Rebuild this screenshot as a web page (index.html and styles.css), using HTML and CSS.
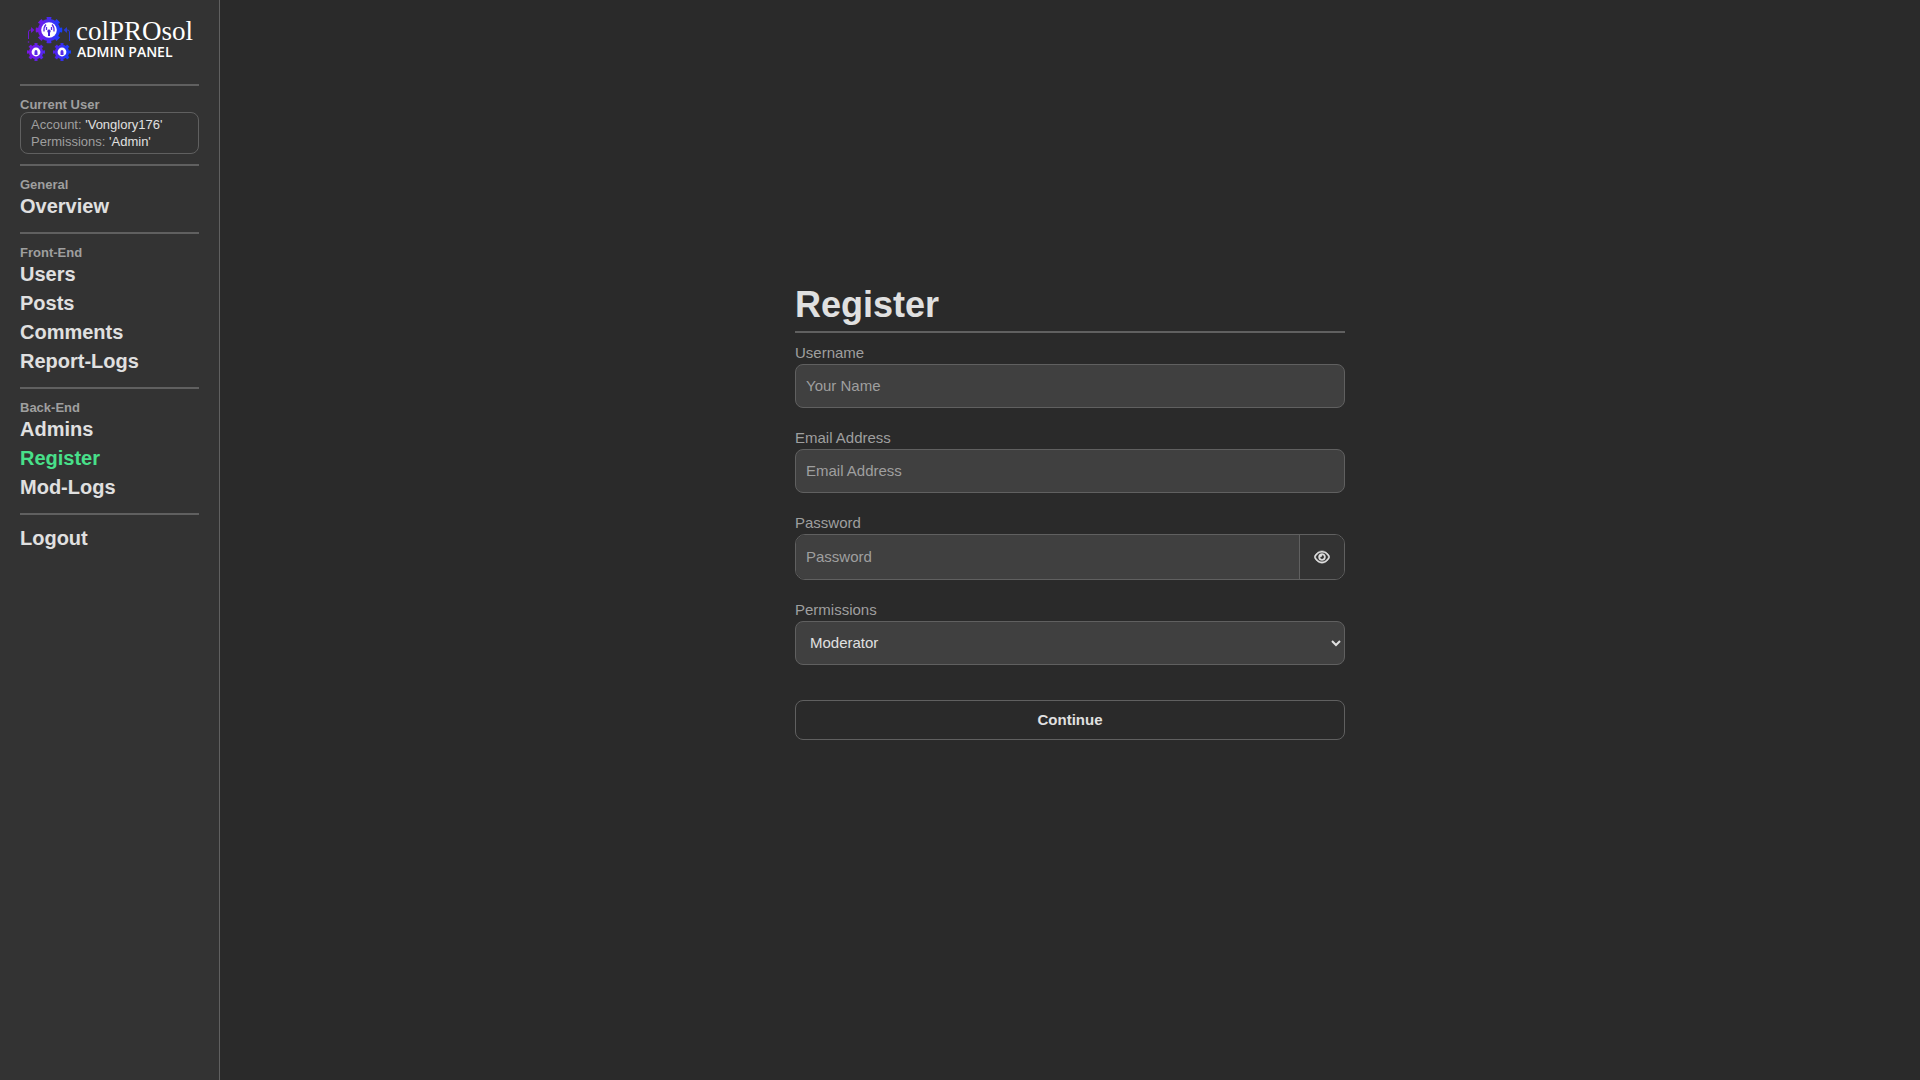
FILE: index.html
```html
<!DOCTYPE html>
<html lang="en">
<head>
<meta charset="utf-8">
<meta name="viewport" content="width=device-width, initial-scale=1">
<title>colPROsol Admin Panel - Register</title>
<link rel="stylesheet" href="styles.css">
</head>
<body>
<aside class="sidebar">
  <a class="logo" href="#">
    <svg class="logo-mark" viewBox="0 0 44 44" aria-hidden="true">
      <defs>
        <linearGradient id="brand-main" gradientUnits="userSpaceOnUse" x1="9" y1="0" x2="35" y2="0"><stop offset="0" stop-color="#7d14e6"/><stop offset="1" stop-color="#1440ff"/></linearGradient>
        <linearGradient id="brand-left" gradientUnits="userSpaceOnUse" x1="0" y1="0" x2="18" y2="0"><stop offset="0" stop-color="#7d14e6"/><stop offset="1" stop-color="#5028f0"/></linearGradient>
        <linearGradient id="brand-right" gradientUnits="userSpaceOnUse" x1="26" y1="0" x2="44" y2="0"><stop offset="0" stop-color="#5a1eea"/><stop offset="1" stop-color="#1440ff"/></linearGradient>
      </defs>
      <circle cx="22" cy="13" r="11" fill="url(#brand-main)"/>
      <circle cx="22" cy="13" r="11.8" fill="none" stroke="url(#brand-main)" stroke-width="3" pathLength="16" stroke-dasharray="1 1" stroke-dashoffset=".5"/>
      <circle cx="22" cy="13" r="7.800" fill="#fff"/>
      <path d="M19 7.500q-2.500 2.500-2 7M25 7.500q2.500 2.500 2 7M19.500 10v3M24.500 10v3" fill="none" stroke="#5a2be8" stroke-width="1.300"/>
      <path d="M22 12.500a1.800 1.800 0 0 1 1 3.200V19h-2v-3.300a1.800 1.800 0 0 1 1-3.200z" fill="#4424d8"/>
      <circle cx="9" cy="35" r="7.200" fill="url(#brand-left)"/>
      <circle cx="9" cy="35" r="7.800" fill="none" stroke="url(#brand-left)" stroke-width="2.400" pathLength="16" stroke-dasharray="1 1" stroke-dashoffset=".5"/>
      <circle cx="35" cy="35" r="7.200" fill="url(#brand-right)"/>
      <circle cx="35" cy="35" r="7.800" fill="none" stroke="url(#brand-right)" stroke-width="2.400" pathLength="16" stroke-dasharray="1 1" stroke-dashoffset=".5"/>
      <circle cx="9" cy="35" r="4.400" fill="#fff"/>
      <circle cx="35" cy="35" r="4.400" fill="#fff"/>
      <path d="M7.500 38v-3a1.500 2 0 0 1 3 0v3zM33.500 38v-3a1.500 2 0 0 1 3 0v3z" fill="#5a2be8"/>
      <path d="M1.500 22v-7q0-2 2-2h1" fill="none" stroke="#6c1bd0"/>
      <path d="M4 10 7.500 13 4 16z" fill="#6c1bd0"/>
      <circle cx="1.500" cy="25" r=".8" fill="#6c1bd0"/>
      <path d="M42.500 24v-9q0-2-2-2h-1" fill="none" stroke="#2a3bd0"/>
      <path d="M40 10 36.500 13l3.500 3z" fill="#2a3bd0"/>
    </svg>
    <span class="logo-text">
      <span class="logo-name">colPROsol</span>
      <span class="logo-sub">ADMIN PANEL</span>
    </span>
  </a>

  <section class="group group-user">
    <h2 class="group-title">Current User</h2>
    <div class="user-card">
      <div>Account: <span class="user-value">'Vonglory176'</span></div>
      <div>Permissions: <span class="user-value">'Admin'</span></div>
    </div>
  </section>
  <nav>
    <section class="group">
      <h2 class="group-title">General</h2>
      <a class="nav-link" href="#">Overview</a>
    </section>
    <section class="group">
      <h2 class="group-title">Front-End</h2>
      <a class="nav-link" href="#">Users</a>
      <a class="nav-link" href="#">Posts</a>
      <a class="nav-link" href="#">Comments</a>
      <a class="nav-link" href="#">Report-Logs</a>
    </section>
    <section class="group">
      <h2 class="group-title">Back-End</h2>
      <a class="nav-link" href="#">Admins</a>
      <a class="nav-link nav-link-active" href="#" aria-current="page">Register</a>
      <a class="nav-link" href="#">Mod-Logs</a>
    </section>
    <section class="group">
      <a class="nav-link" href="#">Logout</a>
    </section>
  </nav>
</aside>

<main class="content">
  <form class="form">
    <h1 class="form-title">Register</h1>
    <div class="field">
      <label class="label" for="username">Username</label>
      <input class="control" id="username" type="text" placeholder="Your Name">
    </div>
    <div class="field">
      <label class="label" for="email">Email Address</label>
      <input class="control" id="email" type="email" placeholder="Email Address">
    </div>
    <div class="field">
      <label class="label" for="password">Password</label>
      <div class="password">
        <input class="control password-input" id="password" type="password" placeholder="Password">
        <button class="password-toggle" type="button" aria-label="Show password">
          <svg class="eye" viewBox="0 0 576 512" aria-hidden="true"><path fill="currentColor" stroke="currentColor" stroke-width="18" d="M288 80c-65.2 0-118.8 29.6-159.9 67.7C89.6 183.5 63 226 49.4 256c13.6 30 40.2 72.5 78.6 108.3C169.2 402.4 222.8 432 288 432s118.8-29.6 159.9-67.7C486.4 328.5 513 286 526.6 256c-13.6-30-40.2-72.5-78.6-108.3C406.8 109.6 353.2 80 288 80zM95.4 112.6C142.5 68.8 207.2 32 288 32s145.5 36.8 192.6 80.6c46.8 43.5 78.1 95.4 93 131.1c3.3 7.9 3.3 16.7 0 24.6c-14.9 35.7-46.2 87.7-93 131.1C433.5 443.2 368.8 480 288 480s-145.5-36.8-192.6-80.6C48.6 356 17.3 304 2.5 268.3c-3.3-7.9-3.3-16.7 0-24.6C17.3 208 48.6 156 95.4 112.6zM288 336c44.2 0 80-35.8 80-80s-35.8-80-80-80c-.7 0-1.3 0-2 0c1.3 5.1 2 10.5 2 16c0 35.3-28.7 64-64 64c-5.5 0-10.900-.7-16-2c0 .7 0 1.3 0 2c0 44.2 35.8 80 80 80zm0-208a128 128 0 1 1 0 256 128 128 0 1 1 0-256z"/></svg>
        </button>
      </div>
    </div>
    <div class="field">
      <label class="label" for="permissions">Permissions</label>
      <select class="control" id="permissions">
        <option>Moderator</option>
        <option>Admin</option>
      </select>
    </div>
    <button class="submit" type="submit">Continue</button>
  </form>
</main>
</body>
</html>
```

FILE: styles.css
```css
:root {
  --line: #606060;
  --text: #e0e0e0;
  --muted: #9f9f9f;
  --panel: #333333;
  --field: #404040;
}

* {
  box-sizing: border-box;
}

body {
  margin: 0;
  min-height: 100vh;
  display: flex;
  background: #2a2a2a;
  color: var(--text);
  font-family: "Liberation Sans", Arial, sans-serif;
  font-size: 15px;
}

.sidebar {
  flex: none;
  width: 220px;
  padding: 15px 20px;
  background: var(--panel);
  border-right: 1px solid var(--line);
}

.logo {
  display: flex;
  gap: 5px;
  padding: 2px 0 23px 7px;
  color: #fff;
  text-decoration: none;
}

.logo-mark {
  flex: none;
  width: 44px;
  height: 44px;
}

.logo-text {
  display: flex;
  flex-direction: column;
}

.logo-name {
  font-family: "Liberation Serif", "Times New Roman", serif;
  font-size: 27px;
  line-height: 28px;
}

.logo-sub {
  padding-left: 1px;
  font-family: "Open Sans", sans-serif;
  font-size: 14px;
  font-weight: 600;
  line-height: 14px;
}

.group {
  border-top: 2px solid var(--line);
  padding: 9px 0 11px;
}

.group-user {
  padding-bottom: 10px;
}

.group-title {
  margin: 0;
  padding-top: 2px;
  color: var(--muted);
  font-size: 13px;
  line-height: 15px;
}

.user-card {
  padding: 3px 10px;
  border: 1px solid var(--line);
  border-radius: 8px;
  color: var(--muted);
  font-size: 13px;
  line-height: 17px;
}

.user-value {
  color: var(--text);
}

.nav-link {
  display: block;
  color: var(--text);
  font-size: 20px;
  font-weight: bold;
  line-height: 29px;
  text-decoration: none;
}

.nav-link-active {
  color: #48e08a;
}

.content {
  flex: 1;
  display: flex;
  align-items: center;
  justify-content: center;
  padding: 0 20px 55px;
}

.form {
  width: 100%;
  max-width: 550px;
}

.form-title {
  margin: 0 0 10px;
  padding-bottom: 7px;
  border-bottom: 2px solid var(--line);
  font-size: 36px;
  line-height: 39px;
}

.field {
  display: flex;
  flex-direction: column;
  margin-bottom: 20px;
  color: var(--muted);
}

.label {
  padding-bottom: 2px;
  line-height: 19px;
}

.control {
  width: 100%;
  height: 44px;
  padding: 0 10px 2px;
  border: 1px solid var(--line);
  border-radius: 8px;
  background: var(--field);
  color: var(--text);
  font: inherit;
}

.control::placeholder {
  color: var(--muted);
  opacity: 1;
}

.password {
  display: flex;
  border: 1px solid var(--line);
  border-radius: 10px;
  overflow: hidden;
}

.password-input {
  flex: 1;
  border: 0;
  border-radius: 0;
}

.password-toggle {
  display: flex;
  align-items: center;
  justify-content: center;
  width: 45px;
  padding: 0;
  border: 0;
  border-left: 1px solid var(--line);
  background: var(--panel);
  color: var(--text);
}

.eye {
  width: 16px;
  height: 14px;
}

.submit {
  width: 100%;
  height: 40px;
  margin-top: 15px;
  padding: 0 10px 2px;
  border: 1px solid var(--line);
  border-radius: 8px;
  background: transparent;
  color: var(--text);
  font: inherit;
  font-weight: bold;
}
```
